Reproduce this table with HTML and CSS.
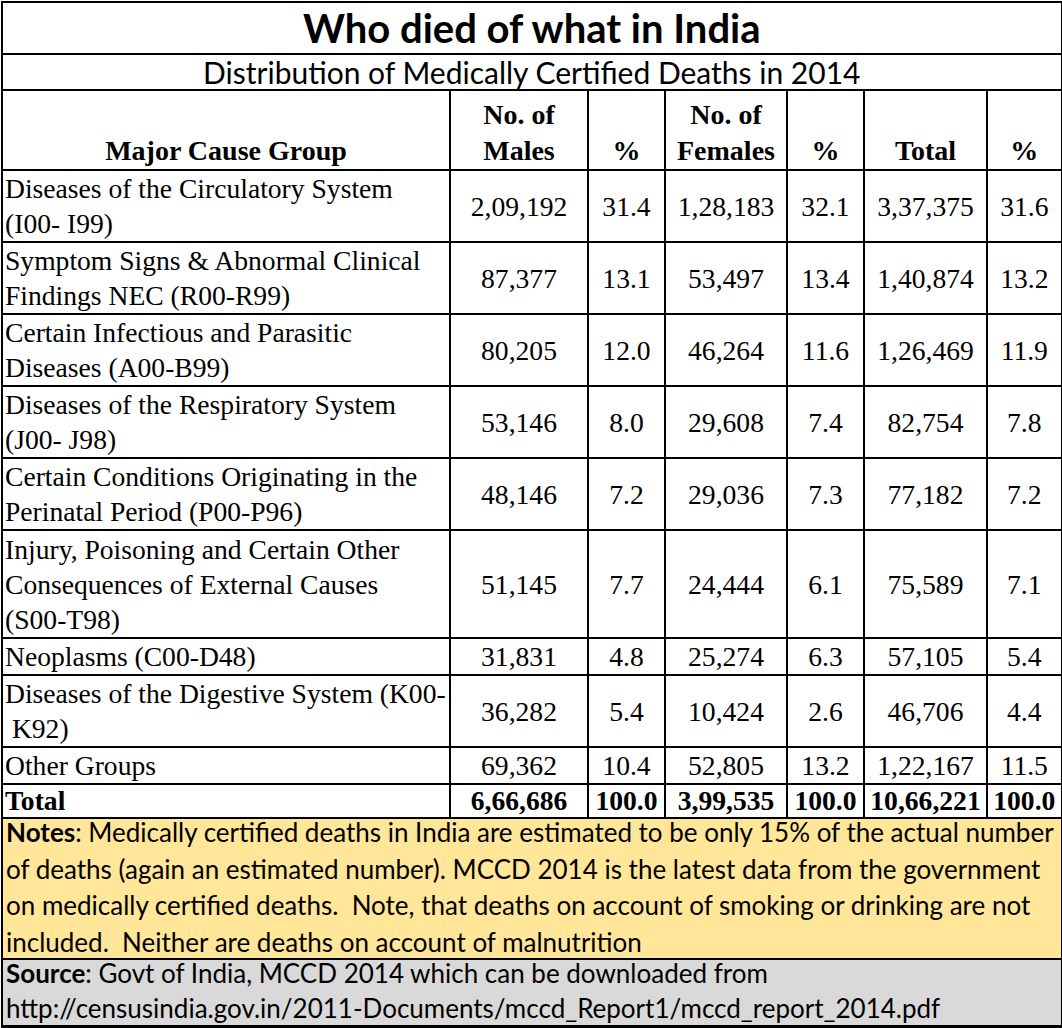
FILE: index.html
```html
<!DOCTYPE html>
<html>
<head>
<meta charset="utf-8">
<link rel="stylesheet" href="styles.css">
</head>
<body>
<table class="sheet">
  <colgroup>
    <col class="c-cause"><col class="c-m"><col class="c-p1"><col class="c-f"><col class="c-p2"><col class="c-t"><col class="c-p3">
  </colgroup>
  <tr class="r-title"><td colspan="7" class="title">Who died of what in India</td></tr>
  <tr class="r-sub"><td colspan="7" class="subtitle">Distribution of Medically Certified Deaths in 2014</td></tr>
  <tr class="r-head">
    <th>Major Cause Group</th>
    <th>No. of<br>Males</th>
    <th>%</th>
    <th>No. of<br>Females</th>
    <th>%</th>
    <th>Total</th>
    <th>%</th>
  </tr>
  <tr class="r2"><td class="cause">Diseases of the Circulatory System<br>(I00- I99)</td><td>2,09,192</td><td>31.4</td><td>1,28,183</td><td>32.1</td><td>3,37,375</td><td>31.6</td></tr>
  <tr class="r2"><td class="cause">Symptom Signs &amp; Abnormal Clinical<br>Findings NEC (R00-R99)</td><td>87,377</td><td>13.1</td><td>53,497</td><td>13.4</td><td>1,40,874</td><td>13.2</td></tr>
  <tr class="r2"><td class="cause">Certain Infectious and Parasitic<br>Diseases (A00-B99)</td><td>80,205</td><td>12.0</td><td>46,264</td><td>11.6</td><td>1,26,469</td><td>11.9</td></tr>
  <tr class="r2"><td class="cause">Diseases of the Respiratory System<br>(J00- J98)</td><td>53,146</td><td>8.0</td><td>29,608</td><td>7.4</td><td>82,754</td><td>7.8</td></tr>
  <tr class="r2"><td class="cause">Certain Conditions Originating in the<br>Perinatal Period (P00-P96)</td><td>48,146</td><td>7.2</td><td>29,036</td><td>7.3</td><td>77,182</td><td>7.2</td></tr>
  <tr class="r3"><td class="cause">Injury, Poisoning and Certain Other<br>Consequences of External Causes<br>(S00-T98)</td><td>51,145</td><td>7.7</td><td>24,444</td><td>6.1</td><td>75,589</td><td>7.1</td></tr>
  <tr class="r1"><td class="cause">Neoplasms (C00-D48)</td><td>31,831</td><td>4.8</td><td>25,274</td><td>6.3</td><td>57,105</td><td>5.4</td></tr>
  <tr class="r2"><td class="cause">Diseases of the Digestive System (K00-<br>&nbsp;K92)</td><td>36,282</td><td>5.4</td><td>10,424</td><td>2.6</td><td>46,706</td><td>4.4</td></tr>
  <tr class="r1"><td class="cause">Other Groups</td><td>69,362</td><td>10.4</td><td>52,805</td><td>13.2</td><td>1,22,167</td><td>11.5</td></tr>
  <tr class="r-total"><td class="cause">Total</td><td>6,66,686</td><td>100.0</td><td>3,99,535</td><td>100.0</td><td>10,66,221</td><td>100.0</td></tr>
  <tr><td colspan="7" class="notes">
    <div class="box box-notes">
      <div class="line"><b>Notes</b>: Medically certified deaths in India are estimated to be only 15% of the actual number</div>
      <div class="line">of deaths (again an estimated number). MCCD 2014 is the latest data from the government</div>
      <div class="line">on medically certified deaths.&nbsp; Note, that deaths on account of smoking or drinking are not</div>
      <div class="line">included.&nbsp; Neither are deaths on account of malnutrition</div>
    </div>
  </td></tr>
  <tr><td colspan="7" class="source">
    <div class="box box-source">
      <div class="line"><b>Source</b>: Govt of India, MCCD 2014 which can be downloaded from</div>
      <div class="line">http://censusindia.gov.in/2011-Documents/mccd_Report1/mccd_report_2014.pdf</div>
    </div>
  </td></tr>
</table>
</body>
</html>
```
FILE: styles.css
```css
html, body {
  margin: 0;
  padding: 0;
  background: #ffffff;
}
body {
  padding: 1px 0 0 1px;
}
.sheet {
  border-collapse: collapse;
  table-layout: fixed;
  width: 1060px;
  font-family: "Liberation Serif", "Times New Roman", serif;
  font-size: 27.6px;
  line-height: 35px;
  color: #000;
  border-right: 3px solid #000;
  border-bottom: 3px solid #000;
}
.c-cause { width: 448px; }
.c-m { width: 138px; }
.c-p1 { width: 77px; }
.c-f { width: 122px; }
.c-p2 { width: 77px; }
.c-t { width: 123px; }
.c-p3 { width: 75px; }

.sheet td, .sheet th {
  border: 2px solid #000;
  padding: 0;
  text-align: center;
  vertical-align: middle;
  white-space: nowrap;
}
.sheet th {
  vertical-align: bottom;
  font-weight: bold;
  font-size: 28px;
  line-height: 36px;
  height: 78px;
}
.sheet td.title {
  font-family: Lato, "Liberation Sans", sans-serif;
  font-weight: bold;
  font-size: 40px;
  height: 50px;
  line-height: 50px;
}
.sheet td.subtitle {
  font-family: Lato, "Liberation Sans", sans-serif;
  font-size: 30px;
  height: 34px;
  line-height: 34px;
}
.sheet td.cause {
  text-align: left;
  padding-left: 2px;
}
.r2 td { height: 70px; }
.r3 td { height: 106px; }
.r1 td { height: 34px; }
.r-total td {
  height: 32px;
  line-height: 32px;
  font-weight: bold;
}
.sheet td.notes, .sheet td.source {
  text-align: left;
  vertical-align: top;
  padding: 0;
}
.notes { background: #ffe699; }
.source { background: #d9d9d9; }
.box {
  display: flex;
  flex-direction: column;
  font-family: Lato, "Liberation Sans", sans-serif;
  font-size: 26px;
  line-height: 26px;
  padding-left: 3px;
}
.box-notes {
  height: 139px;
  gap: 10.6px;
}
.box-source {
  height: 65px;
  gap: 9px;
}
```
